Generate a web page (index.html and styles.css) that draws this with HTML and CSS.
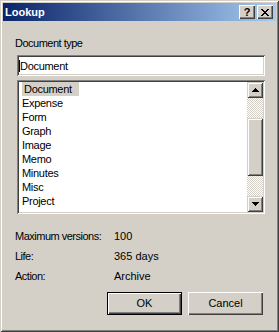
FILE: index.html
```html
<!DOCTYPE html>
<html lang="en">
  <head>
    <meta charset="UTF-8" />
    <meta name="viewport" content="width=device-width, initial-scale=1.0" />
    <title>Lookup</title>
    <link rel="stylesheet" href="styles.css">
  </head>
  <body>
    <div class="window">
      <!-- Title bar -->
      <div class="titlebar">
        <span class="title">Lookup</span>
        <div class="caption-buttons">
          <div class="cap-btn help">?</div>
          <div class="cap-btn">
            <svg width="8" height="7" viewBox="0 0 8 7">
              <path d="M0 0h2v1h1v1h2V1h1V0h2v1H7v1H6v1H5v1h1v1h1v1h1v1H6V6H5V5H3v1H2v1H0V6h1V5h1V4h1V3H2V2H1V1H0z" fill="#000" />
            </svg>
          </div>
        </div>
      </div>

      <div class="content">
        <div class="label">Document type</div>
        <div class="edit"><span class="caret"></span>Document</div>

        <!-- List with scrollbar -->
        <div class="listbox">
          <ul class="items">
            <li><span class="selected">Document</span></li>
            <li>Expense</li>
            <li>Form</li>
            <li>Graph</li>
            <li>Image</li>
            <li>Memo</li>
            <li>Minutes</li>
            <li>Misc</li>
            <li>Project</li>
          </ul>
          <div class="scrollbar">
            <div class="sb-btn">
              <svg width="7" height="4" viewBox="0 0 7 4">
                <path d="M3 0h1v1h1v1h1v1h1v1H0V3h1V2h1V1h1z" fill="#000" />
              </svg>
            </div>
            <div class="track">
              <div class="thumb"></div>
            </div>
            <div class="sb-btn">
              <svg width="7" height="4" viewBox="0 0 7 4">
                <path d="M0 0h7v1H6v1H5v1H4v1H3V3H2V2H1V1H0z" fill="#000" />
              </svg>
            </div>
          </div>
        </div>

        <div class="props">
          <span class="label">Maximum versions:</span><span>100</span>
          <span class="label">Life:</span><span>365 days</span>
          <span class="label">Action:</span><span>Archive</span>
        </div>

        <div class="actions">
          <button class="btn default">OK</button>
          <button class="btn">Cancel</button>
        </div>
      </div>
    </div>
  </body>
</html>
```

FILE: styles.css
```css
body {
  margin: 0;
  font-family: 'Liberation Sans', Arial, sans-serif;
  font-size: 11px;
  color: #000;
  background-color: #d4d0c8;
}
.window {
  width: 279px;
  height: 332px;
  box-sizing: border-box;
  padding: 3px;
  background-color: #d4d0c8;
  box-shadow: inset 1px 1px #d4d0c8, inset -1px -1px #404040,
    inset 2px 2px #fff, inset -2px -2px #808080;
}
.titlebar {
  height: 18px;
  display: flex;
  align-items: center;
  justify-content: space-between;
  padding: 0 3px 0 2px;
  background: linear-gradient(to right, #0a246a, #a6caf0);
}
.title {
  color: #fff;
  font-weight: bold;
  font-size: 11px;
}
.caption-buttons {
  display: flex;
  gap: 2px;
}
.cap-btn {
  width: 16px;
  height: 14px;
  box-sizing: border-box;
  display: flex;
  align-items: center;
  justify-content: center;
  background-color: #d4d0c8;
  box-shadow: inset 1px 1px #fff, inset -1px -1px #404040,
    inset -2px -2px #808080;
}
.cap-btn.help {
  font-weight: bold;
  font-size: 11px;
  line-height: 14px;
}
.content {
  padding: 16px 11px 0 14px;
}
.label {
  margin-left: -2px;
  line-height: 13px;
  letter-spacing: -0.5px;
}
.edit {
  height: 21px;
  margin-top: 5px;
  box-sizing: border-box;
  display: flex;
  align-items: center;
  padding-left: 2px;
  background-color: #fff;
  letter-spacing: -0.3px;
  box-shadow: inset 1px 1px #808080, inset -1px -1px #fff,
    inset 2px 2px #404040, inset -2px -2px #d4d0c8;
}
.caret {
  width: 1px;
  height: 12px;
  margin-right: 0;
  background-color: #000;
}
.listbox {
  height: 134px;
  margin-top: 4px;
  box-sizing: border-box;
  padding: 2px;
  display: flex;
  background-color: #fff;
  box-shadow: inset 1px 1px #808080, inset -1px -1px #fff,
    inset 2px 2px #404040, inset -2px -2px #d4d0c8;
}
.items {
  flex: 1;
  list-style: none;
  margin: 0;
  padding: 0 0 0 3px;
  line-height: 14px;
  letter-spacing: -0.3px;
}
.items li {
  height: 14px;
}
.selected {
  display: inline-block;
  padding: 0 7px 0 2px;
  background-color: #d4d0c8;
}
.scrollbar {
  width: 16px;
  display: flex;
  flex-direction: column;
}
.sb-btn,
.thumb {
  box-sizing: border-box;
  background-color: #d4d0c8;
  box-shadow: inset 1px 1px #d4d0c8, inset -1px -1px #404040,
    inset 2px 2px #fff, inset -2px -2px #808080;
}
.sb-btn {
  height: 16px;
  display: flex;
  align-items: center;
  justify-content: center;
}
.track {
  flex: 1;
  padding-top: 20px;
  background: repeating-conic-gradient(#d4d0c8 0 25%, #fff 0 50%) 0 0 / 2px 2px;
}
.thumb {
  height: 58px;
}
.props {
  display: grid;
  grid-template-columns: 99px auto;
  margin: 12px 0 0 -2px;
  line-height: 20px;
}
.props .label {
  margin-left: 0;
  line-height: 20px;
}
.actions {
  display: flex;
  justify-content: flex-end;
  gap: 6px;
  margin: 6px 2px 0 0;
}
.btn {
  width: 75px;
  height: 23px;
  padding: 0 0 2px;
  border: none;
  font-family: inherit;
  font-size: 11px;
  color: #000;
  background-color: #d4d0c8;
  box-shadow: inset 1px 1px #fff, inset -1px -1px #404040,
    inset -2px -2px #808080;
}
.btn.default {
  border: 1px solid #000;
}
```
